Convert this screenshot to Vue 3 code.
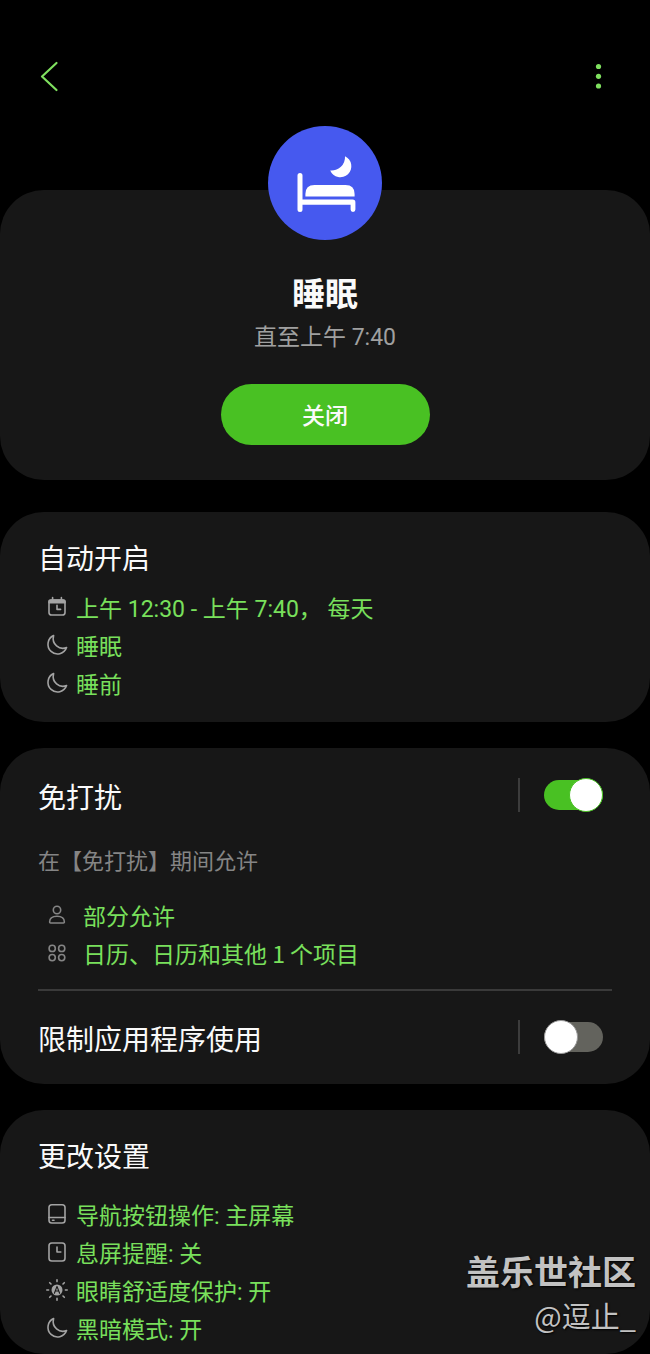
<script setup>
import { ref } from 'vue'

const dnd = ref(true)
const restrict = ref(false)

const triggers = [
  { icon: 'calendar', text: '上午 12:30 - 上午 7:40， 每天' },
  { icon: 'moon', text: '睡眠' },
  { icon: 'moon', text: '睡前' },
]
const allowed = [
  { icon: 'person', text: '部分允许' },
  { icon: 'apps', text: '日历、日历和其他 1 个项目' },
]
const settings = [
  { icon: 'nav', text: '导航按钮操作: 主屏幕' },
  { icon: 'clock', text: '息屏提醒: 关' },
  { icon: 'sun', text: '眼睛舒适度保护: 开' },
  { icon: 'moon', text: '黑暗模式: 开' },
]
</script>

<template>
  <div class="page">
    <svg class="defs" width="0" height="0" aria-hidden="true">
      <symbol id="i-calendar" viewBox="0 0 22 22">
        <rect x="3" y="4" width="16" height="15" rx="2.6" />
        <path d="M3 6.6V5.6Q3 4 5 4H17Q19 4 19 5.6V6.6Z" fill="currentColor" />
        <path d="M6.6 1.6V5M15.4 1.6V5M11 9.4V13.4H14.6" />
      </symbol>
      <symbol id="i-moon" viewBox="0 0 22 22">
        <path d="M7.6 1.6A9.6 9.6 0 1 0 20.6 13.6C13.4 16.4 5.4 10.4 7.6 1.6Z" />
      </symbol>
      <symbol id="i-person" viewBox="0 0 22 22">
        <circle cx="11" cy="6" r="3.7" />
        <path d="M3.6 18Q3.6 12.2 11 12.2T18.4 18Q18.4 19 17.4 19H4.6Q3.6 19 3.6 18Z" />
      </symbol>
      <symbol id="i-apps" viewBox="0 0 22 22">
        <circle cx="6.2" cy="6.4" r="3.1" /><circle cx="15.7" cy="6.4" r="3.1" />
        <circle cx="6.2" cy="15.6" r="3.1" /><circle cx="15.7" cy="15.6" r="3.1" />
      </symbol>
      <symbol id="i-nav" viewBox="0 0 22 22">
        <rect x="3" y="1.8" width="16" height="18.2" rx="2.8" />
        <path d="M3 14.5H19M6.5 17.3H8" />
      </symbol>
      <symbol id="i-clock" viewBox="0 0 22 22">
        <rect x="3" y="2" width="16" height="18" rx="2.8" />
        <path d="M11 6V11H14.8" />
      </symbol>
      <symbol id="i-sun" viewBox="0 0 22 22">
        <circle cx="11" cy="11" r="5.5" fill="currentColor" stroke="none" />
        <path d="M11 .8V2.6M11 19.4V21.2M.8 11H2.6M19.4 11H21.2M3.7 3.7L5 5M17 17L18.3 18.3M3.7 18.3L5 17M17 5L18.3 3.7" />
        <path d="M8.4 14.2L11 7.4L13.6 14.2M9.3 12H12.7" stroke="#171717" stroke-width="1.1" />
      </symbol>
    </svg>

    <header class="bar">
      <button class="icon-btn" type="button" aria-label="返回">
        <svg width="30" height="36" viewBox="0 0 30 36"><path d="M22.5 5L8 18.5L22.5 32" fill="none" stroke="#7fe05f" stroke-width="2.2" stroke-linecap="round" stroke-linejoin="round" /></svg>
      </button>
      <button class="icon-btn" type="button" aria-label="更多选项">
        <svg width="30" height="36" viewBox="0 0 30 36" fill="#7fe05f"><circle cx="14.5" cy="8.5" r="2.6" /><circle cx="14.5" cy="18.3" r="2.6" /><circle cx="14.5" cy="28" r="2.6" /></svg>
      </button>
    </header>

    <main>
      <section class="card hero">
        <svg class="badge" viewBox="0 0 114 114" aria-hidden="true">
          <circle cx="57" cy="57" r="57" fill="#4659ef" />
          <g fill="#fff">
            <path d="M77 30.3A13.4 13.4 0 0 1 62.2 44.5A11 11 0 1 0 77 30.3Z" />
            <path d="M37.4 70.5V68Q37.4 59 46.5 59H77.5Q86.6 59 86.6 68V70.5Z" />
            <path d="M29.5 49.5a2.5 2.5 0 0 1 5 0V73.6H84.6Q87.4 73.6 87.4 76.4V83.5a2.4 2.4 0 0 1-4.8 0V78.8H34.5V83.5a2.5 2.5 0 0 1-5 0Z" />
          </g>
        </svg>
        <h1>睡眠</h1>
        <p class="until">直至上午 7:40</p>
        <button class="off-btn" type="button">关闭</button>
      </section>

      <section class="card auto">
        <h2>自动开启</h2>
        <ul class="list">
          <li v-for="item in triggers" :key="item.text">
            <svg class="glyph" aria-hidden="true"><use :href="'#i-' + item.icon" /></svg>
            <span>{{ item.text }}</span>
          </li>
        </ul>
      </section>

      <section class="card limits">
        <div class="switch-row">
          <h2><label for="dnd">免打扰</label></h2>
          <input id="dnd" v-model="dnd" class="switch" type="checkbox" role="switch">
        </div>
        <p class="note">在【免打扰】期间允许</p>
        <ul class="list wide">
          <li v-for="item in allowed" :key="item.text">
            <svg class="glyph dim" aria-hidden="true"><use :href="'#i-' + item.icon" /></svg>
            <span>{{ item.text }}</span>
          </li>
        </ul>
        <hr>
        <div class="switch-row">
          <h2><label for="restrict">限制应用程序使用</label></h2>
          <input id="restrict" v-model="restrict" class="switch" type="checkbox" role="switch">
        </div>
      </section>

      <section class="card change">
        <h2>更改设置</h2>
        <ul class="list">
          <li v-for="item in settings" :key="item.text">
            <svg class="glyph" aria-hidden="true"><use :href="'#i-' + item.icon" /></svg>
            <span>{{ item.text }}</span>
          </li>
        </ul>
      </section>
    </main>

    <div class="watermark">
      <strong>盖乐世社区</strong>
      <span>@逗止_</span>
    </div>
  </div>
</template>

<style>
body {
  background: #000;
}
</style>

<style scoped>
.page {
  position: relative;
  background: #000;
  color: #fafafa;
  font-family: Roboto, "Noto Sans CJK SC", sans-serif;
}
.defs {
  position: absolute;
}
h1, h2, p, ul {
  margin: 0;
  padding: 0;
  font-weight: 400;
}
.bar {
  display: flex;
  justify-content: space-between;
  align-items: center;
  height: 152px;
  padding: 0 36px 0 34px;
}
.icon-btn {
  display: flex;
  padding: 0;
  border: 0;
  background: none;
}
main {
  display: flex;
  flex-direction: column;
  gap: 26px;
  padding-top: 38px;
}
.card {
  padding: 0 38px;
  border-radius: 44px;
  background: #171717;
}
.hero {
  display: flex;
  flex-direction: column;
  align-items: center;
  margin-bottom: 6px;
  padding-bottom: 35px;
}
.badge {
  width: 114px;
  height: 114px;
  margin-top: -64px;
}
h1 {
  margin-top: 31px;
  font-size: 33px;
  font-weight: 700;
  line-height: 48px;
}
.until {
  margin-top: 3px;
  color: #a0a0a0;
  font-size: 23px;
  line-height: 32px;
}
.off-btn {
  width: 209px;
  height: 61px;
  margin-top: 30px;
  padding: 4px 0 0;
  border: 0;
  border-radius: 31px;
  background: #49c123;
  color: #fafafa;
  font: 500 23px/32px Roboto, "Noto Sans CJK SC", sans-serif;
}
h2 {
  font-size: 28px;
  line-height: 40px;
}
.auto {
  padding-top: 28px;
  padding-bottom: 17px;
}
.auto .list {
  margin-top: 11px;
}
.limits {
  padding-top: 17px;
  padding-bottom: 17px;
}
.change {
  padding-top: 28px;
  padding-bottom: 4px;
}
.change .list {
  margin-top: 20px;
}
.list {
  padding-left: 8px;
  list-style: none;
  color: #79e05c;
  font-size: 23px;
  line-height: 38px;
}
.list li {
  display: flex;
  gap: 8px;
}
.list.wide {
  font-family: "Noto Sans CJK SC", sans-serif;
}
.list.wide li {
  gap: 15px;
}
.glyph {
  flex: none;
  width: 22px;
  height: 22px;
  margin-top: 5px;
  fill: none;
  stroke: currentColor;
  stroke-width: 1.6;
  stroke-linecap: round;
  stroke-linejoin: round;
  color: #a3a3a3;
}
.glyph.dim {
  margin-top: 8px;
  color: #858585;
}
.switch-row {
  display: flex;
  justify-content: space-between;
  align-items: center;
  height: 60px;
}
.switch-row h2 {
  padding-top: 8px;
}
.switch {
  appearance: none;
  display: flex;
  align-items: center;
  box-sizing: border-box;
  width: 94px;
  height: 34px;
  margin: 0;
  padding: 0 9px 0 24px;
  border-left: 2px solid #3c3c3c;
}
.switch::before {
  content: "";
  flex: 1;
  height: 30px;
  border-radius: 15px;
  background: #63635d;
}
.switch::after {
  content: "";
  position: relative;
  box-sizing: border-box;
  width: 34px;
  height: 34px;
  margin-left: -34px;
  border: 1px solid #49c123;
  border-radius: 50%;
  background: #fff;
}
.switch:checked::before {
  background: #49c123;
}
.switch:not(:checked)::after {
  order: -1;
  margin: 0 -34px 0 0;
  border-color: #999;
}
.note {
  margin-top: 22px;
  color: #858585;
  font-size: 22px;
  line-height: 30px;
}
.limits .list {
  margin-top: 19px;
}
hr {
  height: 2px;
  margin: 17px 0 16px;
  border: 0;
  background: #3a3a3a;
}
.watermark {
  position: absolute;
  right: 14px;
  bottom: 17px;
  display: flex;
  flex-direction: column;
  align-items: flex-end;
  color: #c2c2c2;
  font-family: "Noto Sans CJK SC", sans-serif;
  font-size: 29px;
  line-height: 44px;
  text-shadow: 1px 1px 2px #000;
}
.watermark strong {
  font-size: 34px;
  font-weight: 700;
}
</style>
